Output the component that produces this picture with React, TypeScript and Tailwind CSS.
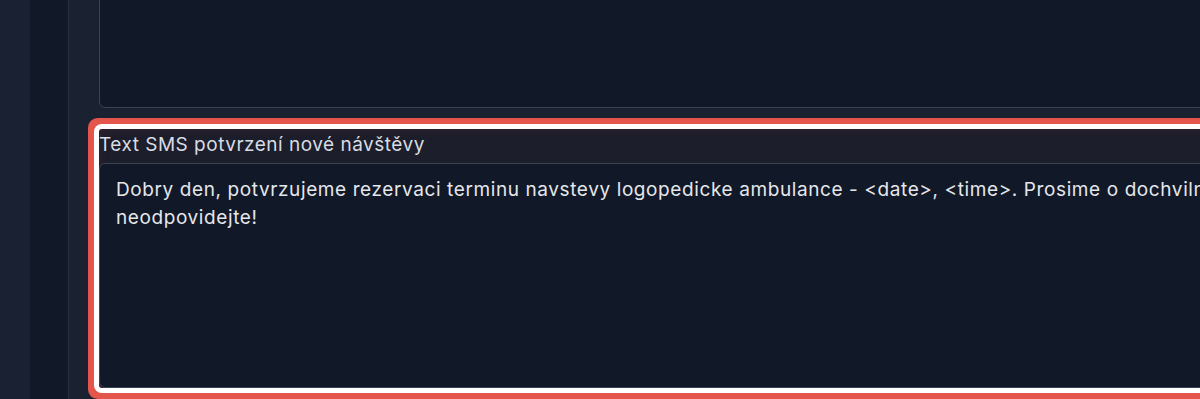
export default function App() {
  return (
    <div
      className="flex h-[399px] w-full overflow-hidden bg-[#1a2232] text-[#e5e7eb]"
      style={{ fontFamily: "Inter, 'Noto Sans', sans-serif" }}
    >
      {/* Sidebar edges */}
      <div className="w-[30px] shrink-0 bg-[#192132]" />
      <div className="w-[38px] shrink-0 bg-[#111827]" />
      <div className="w-px shrink-0 bg-[#293243]" />

      {/* Main form panel */}
      <div className="flex min-w-0 flex-1 flex-col pl-[30px]">
        {/* Previous textarea (cut off at the top) */}
        <div className="-mt-5 h-[128px] w-[1400px] shrink-0 rounded-md border border-[#3a4352] bg-[#111827]" />

        {/* Highlighted field */}
        <div className="mt-[21px] w-[1400px] shrink-0 rounded-[3px] bg-[#1c1e2c] shadow-[0_0_0_5px_#ffffff,0_0_0_11px_#e4564c,inset_0_0_10px_rgba(120,40,50,0.35)]">
          <label className="block pt-[2px] text-[19px] leading-7 tracking-[0.5px] text-[#d9dce2]">
            Text SMS potvrzení nové návštěvy
          </label>
          <div className="mt-1 h-[225px] rounded-md border border-[#3a4352] bg-[#111827] px-4 pt-3 text-[19px] leading-7 tracking-[0.6px] text-[#e5e7eb]">
            Dobry den, potvrzujeme rezervaci terminu navstevy logopedicke ambulance - &lt;date&gt;, &lt;time&gt;. Prosime o dochvilnost. Na tuto SMS
            <br />
            neodpovidejte!
          </div>
        </div>
      </div>
    </div>
  );
}
